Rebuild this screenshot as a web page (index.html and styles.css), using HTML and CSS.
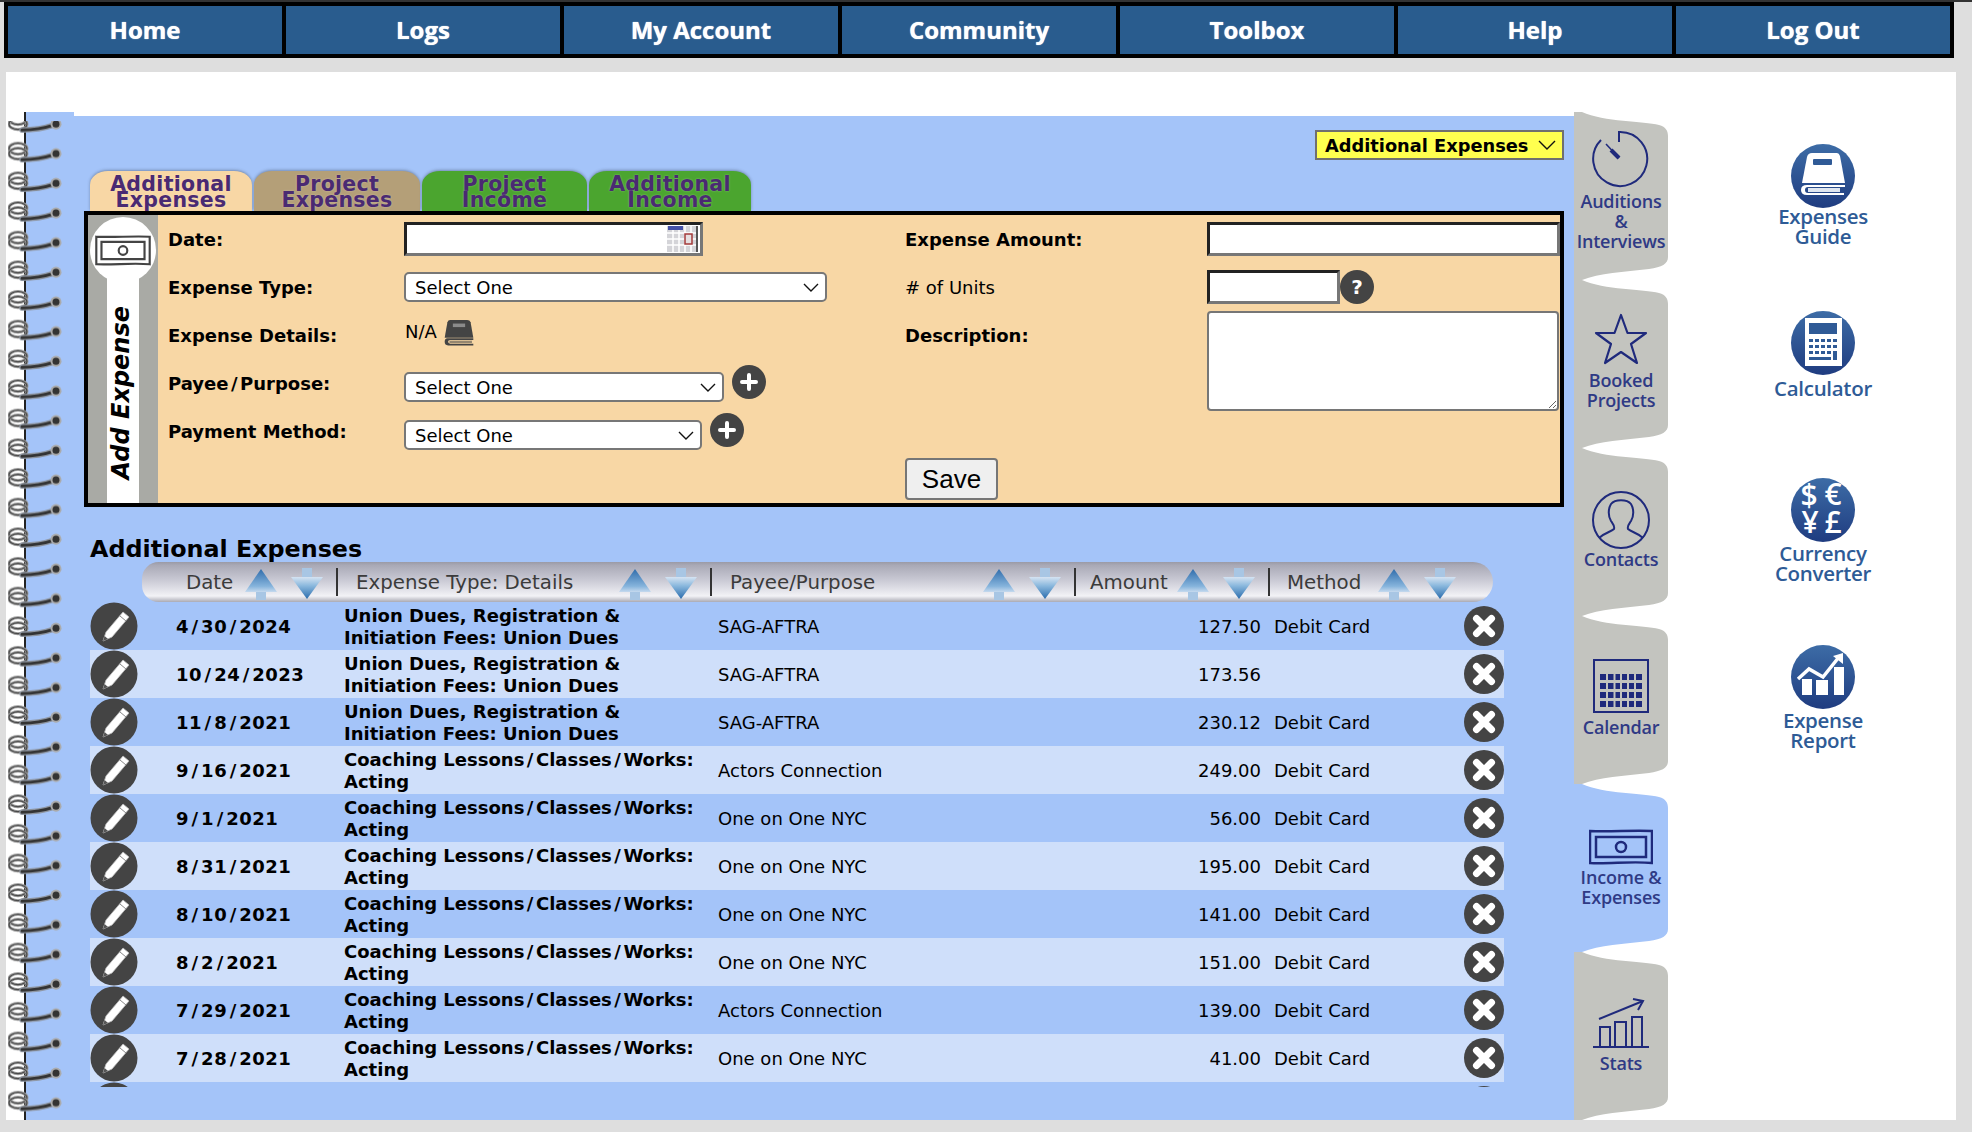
FILE: index.html
```html
<!DOCTYPE html>
<html lang="en">
<head>
<meta charset="utf-8">
<title>Additional Expenses</title>
<link rel="stylesheet" href="styles.css">
</head>
<body>
<svg class="defs" aria-hidden="true">
  <defs>
    <linearGradient id="circ" x1="0" y1="0" x2="0" y2="1"><stop offset="0" stop-color="#3d6ca6"/><stop offset="1" stop-color="#1f3c80"/></linearGradient>
    <linearGradient id="upg" x1="0" y1="0" x2="0" y2="1"><stop offset="0" stop-color="#2f6cab"/><stop offset=".75" stop-color="#86b4dc"/><stop offset="1" stop-color="#c5d9ee"/></linearGradient>
    <linearGradient id="dng" x1="0" y1="0" x2="0" y2="1"><stop offset="0" stop-color="#d5e3f2"/><stop offset=".4" stop-color="#8ab8dd"/><stop offset="1" stop-color="#2a6cad"/></linearGradient>
    <pattern id="coil" width="56" height="29.66" patternUnits="userSpaceOnUse">
      <g fill="none" stroke-linecap="round">
        <ellipse cx="10" cy="7" rx="9" ry="5.500" stroke="#9a9a9a" stroke-width="3"/>
        <ellipse cx="10" cy="7" rx="9" ry="5.500" stroke="#484848" stroke-width="1.200"/>
        <ellipse cx="10" cy="12" rx="9" ry="5.500" stroke="#9a9a9a" stroke-width="3"/>
        <ellipse cx="10" cy="12" rx="9" ry="5.500" stroke="#484848" stroke-width="1.200"/>
        <path d="M14 18c12 0 20-1 32-5" stroke="#8d949f" stroke-width="5.500"/>
        <path d="M14 18c12 0 20-1 32-5" stroke="#333" stroke-width="3"/>
      </g>
      <circle cx="48" cy="12" r="5.500" fill="#aaa"/>
      <circle cx="48" cy="12" r="3.500" fill="#333"/>
    </pattern>
    <symbol id="pencil" viewBox="0 0 48 48">
      <circle cx="24" cy="24" r="23.5" fill="#444"/>
      <path d="M33 10l6 5-17 20-9 4 3-9z" fill="#fff" stroke="#bbb" stroke-width=".8"/>
      <path d="M30 14l6 5" stroke="#888" stroke-width="1" fill="none"/>
      <path d="M13 39l1.600-5 3.400 3z" fill="#555"/>
    </symbol>
    <symbol id="close" viewBox="0 0 40 40">
      <circle cx="20" cy="20" r="20" fill="#444"/>
      <path d="M12.500 12.500l15 15M27.500 12.500l-15 15" stroke="#fff" stroke-width="7" stroke-linecap="round"/>
    </symbol>
    <symbol id="plus" viewBox="0 0 34 34">
      <circle cx="17" cy="17" r="17" fill="#444"/>
      <path d="M17 10v14M10 17h14" stroke="#fff" stroke-width="4" stroke-linecap="round"/>
    </symbol>
    <symbol id="up" viewBox="0 0 32 32">
      <path d="M11 20h10v12H11z" fill="#a8c6e4"/>
      <path d="M16 1l16 23H0z" fill="url(#upg)"/>
    </symbol>
    <symbol id="down" viewBox="0 0 32 32">
      <path d="M11 0h10v12H11z" fill="#a8c6e4"/>
      <path d="M16 31L0 9h32z" fill="url(#dng)"/>
    </symbol>
    <symbol id="money" viewBox="0 0 64 36" fill="none" stroke="currentColor">
      <path d="M1 2c20 1 42-1 62 0v32c-20-2-42 1-62 0z" stroke-width="2.500"/>
      <path d="M7 8h50v20H7z" stroke-width="2.500"/>
      <circle cx="32" cy="18" r="5" stroke-width="2.500"/>
    </symbol>
    <symbol id="book" viewBox="0 0 44 44" preserveAspectRatio="none">
      <path d="M9 0h25q4 0 5 4l4 26H1L5 4q1-4 4-4z" fill="currentColor"/>
      <path d="M13 6h18v6H13z" fill="#8b8b8b"/>
      <path d="M5 31h38v3H9q-3 0-3 3t3 3h34v3H6q-5 0-5-6t4-6z" fill="currentColor"/>
      <path d="M8 35h33v4H8z" fill="currentColor" opacity=".55"/>
    </symbol>
  </defs>
</svg>

<nav class="nav">
  <a class="nav-item">Home</a>
  <a class="nav-item">Logs</a>
  <a class="nav-item">My Account</a>
  <a class="nav-item">Community</a>
  <a class="nav-item">Toolbox</a>
  <a class="nav-item">Help</a>
  <a class="nav-item">Log Out</a>
</nav>

<div class="sheet">
  <div class="binding">
    <svg class="coils" width="56" height="1008" aria-hidden="true"><rect x="0" y="9" width="56" height="999" fill="url(#coil)"/></svg>
  </div>

  <main class="page">
    <div class="jump">Additional Expenses
      <svg class="chev" width="18" height="10" viewBox="0 0 18 10"><path d="M1 1l8 8 8-8" fill="none" stroke="#111" stroke-width="1.400"/></svg>
    </div>

    <div class="form-tabs">
      <div class="ftab ftab-a">Additional<br>Expenses</div>
      <div class="ftab ftab-b">Project<br>Expenses</div>
      <div class="ftab ftab-c">Project<br>Income</div>
      <div class="ftab ftab-d">Additional<br>Income</div>
    </div>

    <section class="form-box">
      <div class="strip">
        <div class="strip-circle"><svg class="strip-money" width="56" height="31"><use href="#money"/></svg></div>
        <div class="strip-bar"><span class="strip-text">Add Expense</span></div>
      </div>
      <div class="form-left">
        <div class="frow">
          <label class="flabel">Date:</label>
          <div class="date-wrap">
            <input class="inset date-input" type="text">
            <svg class="cal" width="31" height="26" viewBox="0 0 31 26" aria-hidden="true">
              <rect width="31" height="26" fill="#d4d4d8"/>
              <path d="M0 7h31M0 13h31M0 19h31M6 0v26M12 0v26M18 0v26M24 0v26" stroke="#fff" stroke-width="1.500"/>
              <rect x="1" width="15" height="4" fill="#4450a8"/>
              <rect x="18" y="8" width="7" height="10" fill="#e6dfe0" stroke="#a33a3a" stroke-width="1.500"/>
              <rect x="29" width="2" height="26" fill="#555"/>
            </svg>
          </div>
        </div>
        <div class="frow">
          <label class="flabel">Expense Type:</label>
          <div class="sel sel-type"><select class="sel-ctl"><option>Select One</option></select><svg class="sel-chev" width="16" height="9" viewBox="0 0 16 9"><path d="M1 1l7 7 7-7" fill="none" stroke="#111" stroke-width="1.400"/></svg></div>
        </div>
        <div class="frow">
          <label class="flabel">Expense Details:</label>
          <span class="na">N/A</span>
          <svg class="na-book" width="30" height="26"><use href="#book"/></svg>
        </div>
        <div class="frow">
          <label class="flabel">Payee<span class="sl">/</span>Purpose:</label>
          <div class="sel sel-payee sel-low"><select class="sel-ctl"><option>Select One</option></select><svg class="sel-chev" width="16" height="9" viewBox="0 0 16 9"><path d="M1 1l7 7 7-7" fill="none" stroke="#111" stroke-width="1.400"/></svg></div>
          <svg class="plus" width="34" height="34"><use href="#plus"/></svg>
        </div>
        <div class="frow">
          <label class="flabel">Payment Method:</label>
          <div class="sel sel-method sel-low"><select class="sel-ctl"><option>Select One</option></select><svg class="sel-chev" width="16" height="9" viewBox="0 0 16 9"><path d="M1 1l7 7 7-7" fill="none" stroke="#111" stroke-width="1.400"/></svg></div>
          <svg class="plus" width="34" height="34"><use href="#plus"/></svg>
        </div>
      </div>
      <div class="form-right">
        <div class="frow">
          <label class="flabel flabel-r">Expense Amount:</label>
          <input class="inset amount-input" type="text">
        </div>
        <div class="frow">
          <label class="flabel flabel-r flabel-plain"># of Units</label>
          <input class="inset units-input" type="text">
          <span class="help">?</span>
        </div>
        <div class="frow frow-top">
          <label class="flabel flabel-r">Description:</label>
          <textarea class="desc"></textarea>
        </div>
        <button class="save" type="button">Save</button>
      </div>
    </section>

    <h2 class="title">Additional Expenses</h2>

    <div class="thead">
      <span class="th th-date">Date</span>
      <svg class="ar ar-up" width="32" height="32"><use href="#up"/></svg><svg class="ar ar-dn" width="32" height="32"><use href="#down"/></svg><i class="sep"></i>
      <span class="th th-type">Expense Type: Details</span>
      <svg class="ar ar-up" width="32" height="32"><use href="#up"/></svg><svg class="ar ar-dn" width="32" height="32"><use href="#down"/></svg><i class="sep"></i>
      <span class="th th-payee">Payee/Purpose</span>
      <svg class="ar ar-up" width="32" height="32"><use href="#up"/></svg><svg class="ar ar-dn" width="32" height="32"><use href="#down"/></svg><i class="sep"></i>
      <span class="th th-amount">Amount</span>
      <svg class="ar ar-up" width="32" height="32"><use href="#up"/></svg><svg class="ar ar-dn" width="32" height="32"><use href="#down"/></svg><i class="sep"></i>
      <span class="th th-method">Method</span>
      <svg class="ar ar-up" width="32" height="32"><use href="#up"/></svg><svg class="ar ar-dn" width="32" height="32"><use href="#down"/></svg>
    </div>

    <div class="rows">
      <div class="row"><svg class="edit" width="48" height="48"><use href="#pencil"/></svg><b class="c-date">4<span class="sl">/</span>30<span class="sl">/</span>2024</b><b class="c-type">Union Dues, Registration &amp;<br>Initiation Fees: Union Dues</b><span class="c-payee">SAG-AFTRA</span><span class="c-amt">127.50</span><span class="c-method">Debit Card</span><svg class="del" width="40" height="40"><use href="#close"/></svg></div>
      <div class="row"><svg class="edit" width="48" height="48"><use href="#pencil"/></svg><b class="c-date">10<span class="sl">/</span>24<span class="sl">/</span>2023</b><b class="c-type">Union Dues, Registration &amp;<br>Initiation Fees: Union Dues</b><span class="c-payee">SAG-AFTRA</span><span class="c-amt">173.56</span><span class="c-method"></span><svg class="del" width="40" height="40"><use href="#close"/></svg></div>
      <div class="row"><svg class="edit" width="48" height="48"><use href="#pencil"/></svg><b class="c-date">11<span class="sl">/</span>8<span class="sl">/</span>2021</b><b class="c-type">Union Dues, Registration &amp;<br>Initiation Fees: Union Dues</b><span class="c-payee">SAG-AFTRA</span><span class="c-amt">230.12</span><span class="c-method">Debit Card</span><svg class="del" width="40" height="40"><use href="#close"/></svg></div>
      <div class="row"><svg class="edit" width="48" height="48"><use href="#pencil"/></svg><b class="c-date">9<span class="sl">/</span>16<span class="sl">/</span>2021</b><b class="c-type">Coaching Lessons<span class="sl">/</span>Classes<span class="sl">/</span>Works:<br>Acting</b><span class="c-payee">Actors Connection</span><span class="c-amt">249.00</span><span class="c-method">Debit Card</span><svg class="del" width="40" height="40"><use href="#close"/></svg></div>
      <div class="row"><svg class="edit" width="48" height="48"><use href="#pencil"/></svg><b class="c-date">9<span class="sl">/</span>1<span class="sl">/</span>2021</b><b class="c-type">Coaching Lessons<span class="sl">/</span>Classes<span class="sl">/</span>Works:<br>Acting</b><span class="c-payee">One on One NYC</span><span class="c-amt">56.00</span><span class="c-method">Debit Card</span><svg class="del" width="40" height="40"><use href="#close"/></svg></div>
      <div class="row"><svg class="edit" width="48" height="48"><use href="#pencil"/></svg><b class="c-date">8<span class="sl">/</span>31<span class="sl">/</span>2021</b><b class="c-type">Coaching Lessons<span class="sl">/</span>Classes<span class="sl">/</span>Works:<br>Acting</b><span class="c-payee">One on One NYC</span><span class="c-amt">195.00</span><span class="c-method">Debit Card</span><svg class="del" width="40" height="40"><use href="#close"/></svg></div>
      <div class="row"><svg class="edit" width="48" height="48"><use href="#pencil"/></svg><b class="c-date">8<span class="sl">/</span>10<span class="sl">/</span>2021</b><b class="c-type">Coaching Lessons<span class="sl">/</span>Classes<span class="sl">/</span>Works:<br>Acting</b><span class="c-payee">One on One NYC</span><span class="c-amt">141.00</span><span class="c-method">Debit Card</span><svg class="del" width="40" height="40"><use href="#close"/></svg></div>
      <div class="row"><svg class="edit" width="48" height="48"><use href="#pencil"/></svg><b class="c-date">8<span class="sl">/</span>2<span class="sl">/</span>2021</b><b class="c-type">Coaching Lessons<span class="sl">/</span>Classes<span class="sl">/</span>Works:<br>Acting</b><span class="c-payee">One on One NYC</span><span class="c-amt">151.00</span><span class="c-method">Debit Card</span><svg class="del" width="40" height="40"><use href="#close"/></svg></div>
      <div class="row"><svg class="edit" width="48" height="48"><use href="#pencil"/></svg><b class="c-date">7<span class="sl">/</span>29<span class="sl">/</span>2021</b><b class="c-type">Coaching Lessons<span class="sl">/</span>Classes<span class="sl">/</span>Works:<br>Acting</b><span class="c-payee">Actors Connection</span><span class="c-amt">139.00</span><span class="c-method">Debit Card</span><svg class="del" width="40" height="40"><use href="#close"/></svg></div>
      <div class="row"><svg class="edit" width="48" height="48"><use href="#pencil"/></svg><b class="c-date">7<span class="sl">/</span>28<span class="sl">/</span>2021</b><b class="c-type">Coaching Lessons<span class="sl">/</span>Classes<span class="sl">/</span>Works:<br>Acting</b><span class="c-payee">One on One NYC</span><span class="c-amt">41.00</span><span class="c-method">Debit Card</span><svg class="del" width="40" height="40"><use href="#close"/></svg></div>
      <div class="row"><svg class="edit" width="48" height="48"><use href="#pencil"/></svg><span class="c-date"></span><span class="c-type"></span><span class="c-payee"></span><span class="c-amt"></span><span class="c-method"></span><svg class="del" width="40" height="40"><use href="#close"/></svg></div>
    </div>
  </main>

  <aside class="side-tabs">
    <a class="stab stab-1">
      <svg class="sicon sicon-left" width="60" height="58" viewBox="0 0 60 58" fill="none" stroke="currentColor" stroke-width="2"><path d="M31 2a27 27 0 1 1-19 8"/><path d="M30 1v11"/><path d="M17 14l13 14" stroke-width="1.500"/><path d="M22 20l8 8" stroke-width="4"/></svg>
      <span class="slabel">Auditions<br>&amp;<br>Interviews</span>
    </a>
    <a class="stab stab-2">
      <svg class="sicon" width="54" height="52" viewBox="0 0 54 52" fill="none" stroke="currentColor" stroke-width="2.200"><path d="M27 2l6.500 18H52L37 31l6 19-16-11-16 11 6-19L2 20h18.500z" stroke-linejoin="round"/></svg>
      <span class="slabel">Booked<br>Projects</span>
    </a>
    <a class="stab stab-3">
      <svg class="sicon" width="60" height="60" viewBox="0 0 60 60" fill="none" stroke="currentColor" stroke-width="2"><circle cx="30" cy="30" r="28"/><path d="M8 48c5-5 12-6 15-9 1-3-1-5-3-8-3-5-3-12 0-17 4-5 16-5 20 0 3 5 3 12 0 17-2 3-4 5-3 8 3 3 10 4 15 9"/></svg>
      <span class="slabel">Contacts</span>
    </a>
    <a class="stab stab-4">
      <svg class="sicon" width="56" height="54" viewBox="0 0 56 54"><rect x="1" y="1" width="54" height="52" fill="none" stroke="currentColor" stroke-width="2"/><g fill="currentColor"><path d="M7 15h42v6H7zM7 24h42v6H7zM7 33h42v6H7zM7 42h42v6H7z"/></g><path d="M14 13v37M21.500 13v37M28 13v37M35 13v37M42 13v37" stroke="#c3c4bf" stroke-width="2"/></svg>
      <span class="slabel">Calendar</span>
    </a>
    <a class="stab stab-5 stab-active">
      <svg class="sicon" width="64" height="36"><use href="#money"/></svg>
      <span class="slabel">Income &amp;<br>Expenses</span>
    </a>
    <a class="stab stab-6">
      <svg class="sicon" width="56" height="52" viewBox="0 0 56 52" fill="none" stroke="currentColor" stroke-width="2"><path d="M6 22L50 4"/><path d="M40 2l10 2-5 9"/><path d="M0 50h56" stroke-width="2.200"/><path d="M7 50V30h10v20M22 50V25h11v25M39 50V20h10v30"/></svg>
      <span class="slabel">Stats</span>
    </a>
  </aside>

  <aside class="tools">
    <a class="tool">
      <svg class="tool-icon" width="64" height="64" viewBox="0 0 64 64"><circle cx="32" cy="32" r="32" fill="url(#circ)"/><path d="M21 9h25q2 0 3 3l5 27H11l5-26q1-4 5-4z" fill="#fff"/><rect x="22" y="15" width="19" height="6" rx="1" fill="#2f5a96"/><path d="M16 41h38v2H17q-3 0-3 3t3 3h36v2H16q-6 0-6-5t6-5z" fill="#fff"/><path d="M17 44h32v4H17z" fill="#dfe6f0"/></svg>
      <span class="tool-label">Expenses<br>Guide</span>
    </a>
    <a class="tool">
      <svg class="tool-icon" width="64" height="64" viewBox="0 0 64 64"><circle cx="32" cy="32" r="32" fill="url(#circ)"/><rect x="14" y="7" width="37" height="48" fill="#fff"/><rect x="18" y="12" width="28" height="11" fill="#2f5a96"/><g fill="#2f5a96"><rect x="18" y="28" width="4" height="3"/><rect x="24" y="28" width="4" height="3"/><rect x="30" y="28" width="4" height="3"/><rect x="36" y="28" width="4" height="3"/><rect x="42" y="28" width="4" height="3"/><rect x="18" y="34" width="4" height="3"/><rect x="24" y="34" width="4" height="3"/><rect x="30" y="34" width="4" height="3"/><rect x="36" y="34" width="4" height="3"/><rect x="42" y="34" width="4" height="3"/><rect x="18" y="40" width="4" height="3"/><rect x="24" y="40" width="4" height="3"/><rect x="30" y="40" width="4" height="3"/><rect x="36" y="40" width="4" height="3"/><rect x="42" y="40" width="4" height="9"/><rect x="18" y="46" width="22" height="3"/></g></svg>
      <span class="tool-label tool-label-calc">Calculator</span>
    </a>
    <a class="tool">
      <svg class="tool-icon tool-icon-text" width="64" height="64" viewBox="0 0 64 64"><circle cx="32" cy="32" r="32" fill="url(#circ)"/><g fill="#fff" font-family="Open Sans, sans-serif" font-weight="600" font-size="30" text-anchor="middle"><text x="18" y="28">$</text><text x="42" y="27">€</text><text x="19" y="55">¥</text><text x="42" y="55">£</text></g></svg>
      <span class="tool-label tool-label-low">Currency<br>Converter</span>
    </a>
    <a class="tool">
      <svg class="tool-icon" width="64" height="64" viewBox="0 0 64 64"><circle cx="32" cy="32" r="32" fill="url(#circ)"/><path d="M11 34h10v16H11zM25 35h12v15H25zM43 22h10v28H43z" fill="#fff"/><path d="M7 34l11-10 14 8 16-20" fill="none" stroke="#fff" stroke-width="3.500"/><path d="M42 11l10-3v11z" fill="#fff"/></svg>
      <span class="tool-label tool-label-low">Expense<br>Report</span>
    </a>
  </aside>
</div>
</body>
</html>
```

FILE: styles.css
```css
* { box-sizing: border-box; }
html, body { margin: 0; padding: 0; background: #dedede; }
body {
  height: 1132px;
  overflow: hidden;
  border-top: 2px solid #333;
  font-family: "DejaVu Sans", Verdana, sans-serif;
  font-size: 18px;
  color: #000;
}
.defs { position: absolute; width: 0; height: 0; }
.sl { margin: 0 2.5px; }

.nav {
  display: flex;
  gap: 4px;
  width: 1950px;
  margin-left: 4px;
  padding: 4px;
  background: #000;
}
.nav-item {
  flex: 1;
  height: 48px;
  line-height: 48px;
  text-align: center;
  background: #295c8e;
  color: #fff;
  font-family: "Open Sans", sans-serif;
  font-weight: 700;
  font-size: 24px;
  text-shadow: 0 0 1px #fff;
}

.sheet {
  display: flex;
  align-items: flex-start;
  width: 1950px;
  height: 1048px;
  margin: 14px 0 0 6px;
  padding-top: 40px;
  background: #fff;
}

.binding {
  position: relative;
  flex: none;
  width: 20px;
  height: 1008px;
  border-right: 2px solid #222;
}
.coils { position: absolute; left: 2px; top: 0; z-index: 2; }

.page {
  position: relative;
  flex: none;
  display: flex;
  flex-direction: column;
  width: 1548px;
  height: 1004px;
  margin-top: 4px;
  padding-top: 14px;
  background: #a4c4f9;
}
.page::before {
  content: "";
  position: absolute;
  left: 0;
  top: -4px;
  width: 48px;
  height: 4px;
  background: #a4c4f9;
}

.jump {
  display: flex;
  align-items: center;
  justify-content: space-between;
  align-self: flex-end;
  width: 249px;
  height: 30px;
  margin-right: 10px;
  padding: 0 6px 0 8px;
  border: 2px solid #6f6f6f;
  background: #ffff4f;
  font-weight: 700;
  font-size: 17.8px;
}

.form-tabs {
  display: flex;
  gap: 2px;
  height: 40px;
  margin: 11px 0 0 64px;
}
.ftab {
  padding-top: 5px;
  border-radius: 18px 18px 0 0 / 14px 14px 0 0;
  box-shadow: 0 -1px 3px rgba(60, 70, 90, .45);
  text-align: center;
  color: #4a2a72;
  font-weight: 700;
  font-size: 20.5px;
  line-height: 16px;
  letter-spacing: .3px;
  text-shadow: 0 0 2px rgba(255, 255, 255, .35);
}
.ftab-a { width: 162px; background: #f8d7a5; }
.ftab-b { width: 166px; background: #b49f78; }
.ftab-c { width: 165px; background: #4ba52f; }
.ftab-d { width: 162px; background: #4ba52f; }

.form-box {
  position: relative;
  display: flex;
  flex: none;
  width: 1480px;
  height: 296px;
  margin-left: 58px;
  border: 4px solid #000;
  background: #f8d7a5;
}
.strip {
  flex: none;
  display: flex;
  flex-direction: column;
  align-items: center;
  width: 70px;
  background: #a9aaa5;
}
.strip-circle {
  display: flex;
  align-items: center;
  justify-content: center;
  flex: none;
  width: 66px;
  height: 66px;
  margin-top: 2px;
  border-radius: 50%;
  background: #fff;
  color: #444;
}
.strip-bar {
  flex: 1;
  display: flex;
  flex-direction: column;
  justify-content: flex-end;
  align-items: center;
  width: 32px;
  margin-top: -6px;
  padding-bottom: 23px;
  background: #fff;
}
.strip-text {
  writing-mode: vertical-rl;
  transform: rotate(180deg) translateX(2px);
  font-weight: 700;
  font-style: italic;
  font-size: 24px;
  line-height: 32px;
  white-space: nowrap;
}

.form-left {
  flex: none;
  width: 737px;
  margin-left: 10px;
  padding-top: 1px;
}
.form-right {
  flex: none;
  width: 659px;
  padding-top: 1px;
}
.frow {
  display: flex;
  align-items: center;
  height: 48px;
}
.frow-top { align-items: flex-start; height: 100px; margin-top: -1px; }
.flabel {
  flex: none;
  width: 236px;
  padding-bottom: 2px;
  font-weight: 700;
}
.flabel-r { width: 302px; }
.flabel-plain { font-weight: 400; }
.frow-top .flabel { line-height: 50px; padding-bottom: 0; }

.inset {
  height: 34px;
  padding: 0 4px;
  border-style: solid;
  border-width: 3px;
  border-color: #222 #777 #777 #222;
  background: #fff;
  outline: none;
}
.date-wrap { position: relative; display: flex; margin-top: -2px; }
.date-input { width: 299px; }
.cal { position: absolute; right: 5px; top: 4px; }
.amount-input { width: 353px; margin-top: -2px; }
.units-input { width: 133px; margin-top: -2px; }
.help {
  flex: none;
  width: 34px;
  height: 34px;
  margin-top: -2px;
  border-radius: 50%;
  background: #444;
  color: #fff;
  font-weight: 700;
  font-size: 20px;
  line-height: 34px;
  text-align: center;
}
.desc {
  width: 352px;
  height: 100px;
  border: 2px solid #767676;
  border-radius: 4px;
  background: #fff;
  outline: none;
}
.save {
  display: block;
  width: 93px;
  height: 42px;
  margin-top: 47px;
  padding: 0;
  border: 2px solid #767676;
  border-radius: 4px;
  background: #efefef;
  color: #000;
  font-family: "Liberation Sans", Arial, sans-serif;
  font-size: 26px;
}

.sel { position: relative; flex: none; height: 30px; margin-top: -2px; }
.sel-type { width: 423px; }
.sel-payee { width: 320px; }
.sel-method { width: 298px; }
.sel-low { margin-top: 6px; }
.sel-ctl {
  width: 100%;
  height: 100%;
  padding: 0 0 0 9px;
  border: 2px solid #777;
  border-radius: 5px;
  background: #fff;
  color: #000;
  font-family: "DejaVu Sans", Verdana, sans-serif;
  font-size: 18px;
  appearance: none;
  -webkit-appearance: none;
}
.sel-chev { position: absolute; right: 8px; top: 11px; }
.plus { flex: none; margin: -4px 0 0 8px; }
.na { margin: -10px 7px 0 1px; }
.na-book { color: #444; margin-top: -6px; }

.title {
  margin: 30px 0 0 64px;
  font-size: 23.8px;
  line-height: 25px;
  font-weight: 700;
}

.thead {
  display: flex;
  align-items: center;
  flex: none;
  width: 1351px;
  height: 40px;
  margin-left: 116px;
  border-radius: 20px 24px 24px 20px;
  background: linear-gradient(#9a9aa6 0, #a9a9b6 8%, #c9c9d4 45%, #f2f2f6 85%, #aaaab4 100%);
  color: #3b3b3b;
  font-size: 19.8px;
}
.th { flex: none; white-space: nowrap; }
.th-date { width: 56px; margin-left: 44px; }
.th-type { width: 260px; margin-left: 18px; }
.th-payee { width: 250px; margin-left: 18px; }
.th-amount { width: 84px; margin-left: 14px; }
.th-method { width: 88px; margin-left: 17px; }
.ar { flex: none; margin-top: 4px; }
.ar-up { margin-left: 3px; }
.ar-dn { margin-left: 14px; }
.sep { flex: none; width: 2px; height: 28px; margin-left: 13px; background: #333; }

.rows {
  flex: none;
  width: 1414px;
  height: 485px;
  margin-left: 64px;
  overflow: hidden;
}
.row {
  display: grid;
  grid-template-columns: 86px 168px 374px 432px 111px 203px 40px;
  align-items: center;
  height: 48px;
}
.row:nth-child(even) { background: #cfdffa; }
.c-date { letter-spacing: .5px; }
.c-type { padding-top: 2px; line-height: 22px; white-space: nowrap; }
.c-amt { text-align: right; }
.c-method { padding-left: 13px; }
.edit { display: block; }
.del { display: block; }
.c-date, .c-payee, .c-amt, .c-method { white-space: nowrap; }

.side-tabs { flex: none; width: 94px; display: flex; flex-direction: column; }
.stab {
  display: flex;
  flex-direction: column;
  align-items: center;
  height: 168px;
  background: #c3c4bf;
  color: #1f2a7c;
  clip-path: path("M0 0L8 0C30 10 70 9 85 13C92 15 94 19 94 24L94 145C94 152 88 155 75 157C50 160 25 161 8 168L0 168Z");
}
.stab-active { background: #a4c4f9; }
.stab-1 { padding-top: 18px; }
.stab-2 { padding-top: 33px; }
.stab-3 { padding-top: 42px; }
.stab-4 { padding-top: 43px; }
.stab-5 { padding-top: 45px; }
.stab-6 { padding-top: 45px; }
.sicon { flex: none; display: block; }
.sicon-left { margin-left: -5px; }
.slabel {
  margin-top: 4px;
  text-align: center;
  color: #2f3a85;
  font-family: "Open Sans", sans-serif;
  font-weight: 600;
  font-size: 18px;
  line-height: 20px;
  letter-spacing: -.2px;
  white-space: nowrap;
}
.stab-1 .slabel { margin-top: 3px; }
.stab-2 .slabel { margin-top: 5px; }
.stab-3 .slabel { margin-top: -1px; }
.stab-5 .slabel { margin-top: 2px; }

.tools {
  flex: none;
  display: flex;
  flex-direction: column;
  align-items: center;
  width: 288px;
  margin-top: 32px;
  padding-left: 22px;
}
.tool {
  display: flex;
  flex-direction: column;
  align-items: center;
  flex: none;
  height: 167px;
}
.tool-icon { display: block; flex: none; }
.tool-icon-text { overflow: visible; }
.tool-label {
  margin-top: -2px;
  text-align: center;
  color: #2e5b96;
  font-family: "Open Sans", sans-serif;
  font-weight: 600;
  font-size: 20.5px;
  line-height: 20px;
  letter-spacing: -.3px;
}
.tool-label-calc { margin-top: 3px; }
.tool-label-low { margin-top: 1px; }
```
